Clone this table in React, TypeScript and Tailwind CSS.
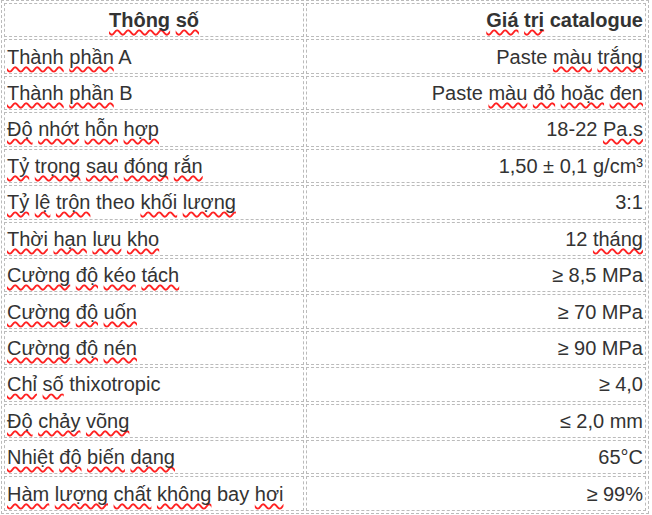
import React from 'react';

// {word} = word flagged by the spell checker (red wavy underline)
const header = ['{Thông} {số}', '{Giá} {trị} catalogue'];

const rows: [string, string][] = [
  ['{Thành} {phần} A', 'Paste {màu} {trắng}'],
  ['{Thành} {phần} B', 'Paste {màu} {đỏ} {hoặc} {đen}'],
  ['{Độ} {nhớt} {hỗn} {hợp}', '18-22 {Pa.s}'],
  ['{Tỷ} {trọng} {sau} {đóng} {rắn}', '1,50 ± 0,1 g/cm³'],
  ['{Tỷ} {lệ} {trộn} theo {khối} {lượng}', '3:1'],
  ['{Thời} {hạn} {lưu} {kho}', '12 {tháng}'],
  ['{Cường} {độ} {kéo} {tách}', '≥ 8,5 MPa'],
  ['{Cường} {độ} {uốn}', '≥ 70 MPa'],
  ['{Cường} {độ} {nén}', '≥ 90 MPa'],
  ['{Chỉ} {số} thixotropic', '≥ 4,0'],
  ['{Độ} {chảy} {võng}', '≤ 2,0 mm'],
  ['{Nhiệt} {độ} {biến} {dạng}', '65°C'],
  ['{Hàm} {lượng} {chất} {không} bay {hơi}', '≥ 99%'],
];

function Marked({ text }: { text: string }) {
  const parts = text.split(/(\{[^}]+\})/).filter(Boolean);
  return (
    <>
      {parts.map((p, i) =>
        p.startsWith('{') ? (
          <span
            key={i}
            className="underline decoration-wavy decoration-[#f22] decoration-[1.5px] underline-offset-[2px] [text-decoration-skip-ink:none]"
          >
            {p.slice(1, -1)}
          </span>
        ) : (
          <span key={i}>{p}</span>
        )
      )}
    </>
  );
}

const cell = 'h-[34.43px] border border-dashed border-[#bbb] px-[2px] py-0 align-middle whitespace-nowrap';

export default function App() {
  return (
    <div className="w-[652px] h-[515px] bg-white overflow-hidden">
      <table
        className="ml-px w-[648px] border border-dashed border-[#bbb] border-separate border-spacing-[2px] text-[20px] leading-normal text-[#333] table-fixed"
        style={{ fontFamily: '"Liberation Sans", Arial, sans-serif' }}
      >
        <colgroup>
          <col className="w-[300px]" />
          <col className="w-[340px]" />
        </colgroup>
        <thead>
          <tr>
            <th className={`${cell} text-center font-bold`}>
              <Marked text={header[0]} />
            </th>
            <th className={`${cell} text-right font-bold`}>
              <Marked text={header[1]} />
            </th>
          </tr>
        </thead>
        <tbody>
          {rows.map(([name, value], i) => (
            <tr key={i}>
              <td className={`${cell} text-left`}>
                <Marked text={name} />
              </td>
              <td className={`${cell} text-right`}>
                <Marked text={value} />
              </td>
            </tr>
          ))}
        </tbody>
      </table>
    </div>
  );
}
